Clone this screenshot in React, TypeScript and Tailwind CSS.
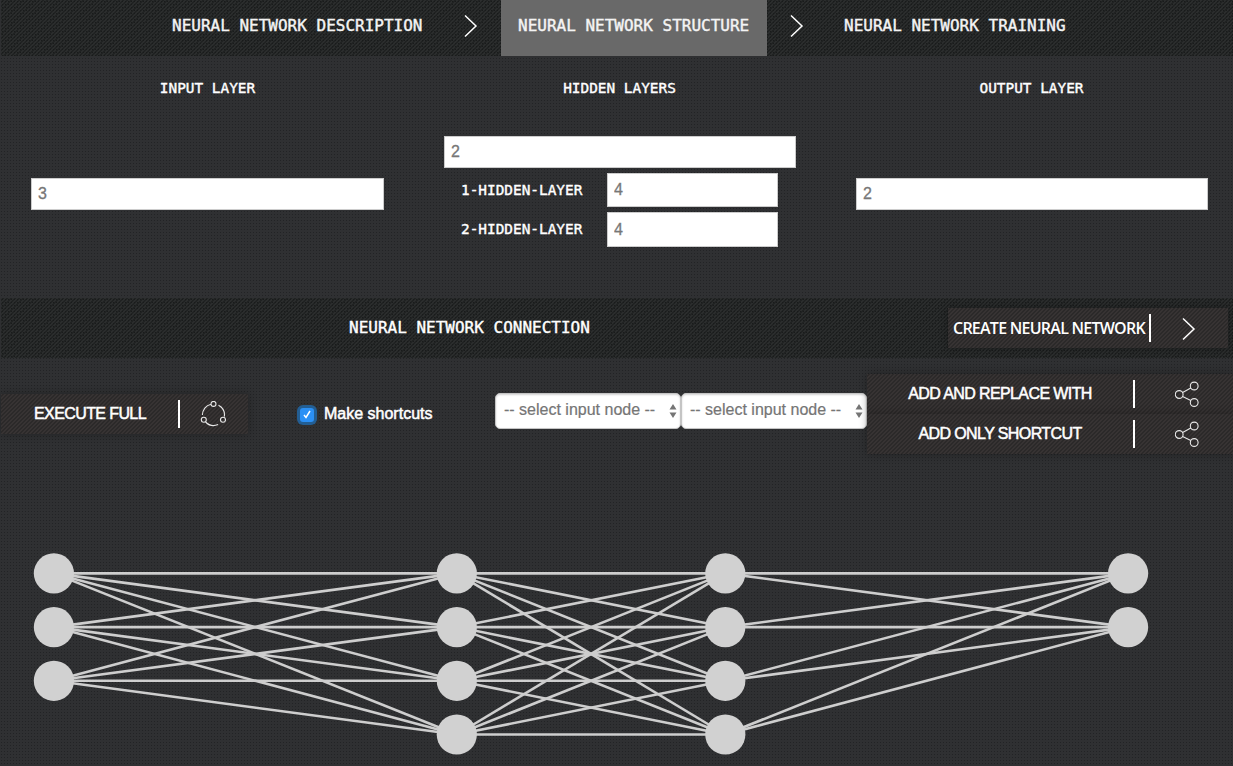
import React from "react";

const pageDots = "bg-[#2f3032] bg-[radial-gradient(circle_at_1.5px_1.5px,#222325_0.5px,transparent_0.9px)] bg-[size:3px_3px]";
const barHatch =
  "border-l border-[#2e2f31] bg-[#232525] bg-[radial-gradient(circle_at_1.5px_1.5px,#191b1b_0.5px,transparent_0.9px),linear-gradient(135deg,#2b2d2d_12.5%,#202222_12.5%,#202222_37.5%,#2b2d2d_37.5%,#2b2d2d_62.5%,#202222_62.5%,#202222_87.5%,#2b2d2d_87.5%)] bg-[size:3px_3px,4px_4px]";
const buttonHatch =
  "bg-[#2e2c2c] bg-[linear-gradient(135deg,#373333_12.5%,#2b2929_12.5%,#2b2929_37.5%,#373333_37.5%,#373333_62.5%,#2b2929_62.5%,#2b2929_87.5%,#373333_87.5%)] bg-[size:4px_4px] shadow-[0_0_8px_rgba(0,0,0,0.3)]";
const mono = "font-['DejaVu_Sans_Mono',monospace]";

function Chevron() {
  return (
    <svg width="14" height="24" viewBox="0 0 14 24" fill="none" stroke="#fff" strokeWidth="1.5" className="shrink-0">
      <path d="M1 1.5 12 12 1 22.5" />
    </svg>
  );
}

function ShareIcon() {
  return (
    <svg width="24" height="26" viewBox="0 0 24 26" fill="none" stroke="#e8e8e8" strokeWidth="1.1" className="shrink-0">
      <circle cx="4.2" cy="13.5" r="3.9" />
      <circle cx="19.2" cy="5" r="3.9" />
      <circle cx="19.2" cy="21.5" r="3.9" />
      <path d="m7.600 11.5 8.2-4.5M7.600 15.5l8.2 4" />
    </svg>
  );
}

function CycleIcon() {
  return (
    <svg width="26" height="26" viewBox="0 0 26 26" fill="none" stroke="#e8e8e8" strokeWidth="1.1" className="shrink-0">
      <circle cx="13.5" cy="2.900" r="2.5" />
      <circle cx="3.8" cy="18.800" r="2.5" />
      <circle cx="23" cy="18.800" r="2.5" />
      <path d="M11 3.2A11.200 11.200 0 0 0 2.4 14M16 3.2M18.500 4.200a11.200 11.200 0 0 1 5.800 11.500M5.600 21a11.200 11.200 0 0 0 12.500 2.600" />
    </svg>
  );
}

function Field({ value, className }: { value: string; className: string }) {
  return (
    <input
      readOnly
      value={value}
      className={`block rounded-none border border-[#ccc] bg-white px-[6px] text-[16px] leading-5 text-[#777] outline-none [-webkit-text-stroke:0.3px_#777] ${className}`}
    />
  );
}

function NodeSelect() {
  return (
    <div className="flex h-9 w-[186px] items-center justify-between rounded-[5px] border border-[#c4c4c4] bg-white pr-[3px] pl-2 text-[#757575] shadow-[inset_0_1px_2px_rgba(0,0,0,0.18)]">
      <span className="pb-0.5 text-[16px] whitespace-nowrap [-webkit-text-stroke:0.2px_#757575]">-- select input node --</span>
      <svg width="8" height="16" viewBox="0 0 8 16" fill="#757575">
        <path d="M0.5 6.5 4 1l3.500 5.500zM0.500 9.500h7L4 15z" />
      </svg>
    </div>
  );
}

function ShortcutButton({ label }: { label: string }) {
  return (
    <button className={`flex h-10 w-[366px] items-center text-[16px] text-white ${buttonHatch}`}>
      <span className="w-[266px] text-center tracking-[-0.6px] [-webkit-text-stroke:0.5px_white]">{label}</span>
      <span className="h-7 w-0.5 bg-white" />
      <span className="ml-10"><ShareIcon /></span>
    </button>
  );
}

const layers = [
  { x: 53.9, count: 3 },
  { x: 456.8, count: 4 },
  { x: 725.3, count: 4 },
  { x: 1128.1, count: 2 },
];
const nodeY = (i: number) => 53.4 + i * 53.7;

function Network() {
  return (
    <svg width="1233" height="246" viewBox="0 0 1233 246" className="block">
      <g stroke="#cecece" strokeWidth="2.6">
        {layers.slice(0, -1).map((from, l) =>
          Array.from({ length: from.count }, (_, i) =>
            Array.from({ length: layers[l + 1].count }, (_, j) => (
              <line key={`${l}-${i}-${j}`} x1={from.x} y1={nodeY(i)} x2={layers[l + 1].x} y2={nodeY(j)} />
            )),
          ),
        )}
      </g>
      <g fill="#d1d1d1">
        {layers.map((layer) =>
          Array.from({ length: layer.count }, (_, i) => (
            <circle key={`${layer.x}-${i}`} cx={layer.x} cy={nodeY(i)} r="20.1" />
          )),
        )}
      </g>
    </svg>
  );
}

export default function App() {
  return (
    <main className={`h-[766px] w-[1233px] overflow-hidden font-['Liberation_Sans',sans-serif] text-white ${pageDots}`}>
      <nav className={`flex h-14 items-start ${barHatch} ${mono} text-[16px] leading-6 text-[#f4f4f4]`}>
        <div className="w-[463px] pt-[14px] pl-[171px] whitespace-nowrap [-webkit-text-stroke:0.4px_#f4f4f4]">NEURAL NETWORK DESCRIPTION</div>
        <div className="w-[37px] pt-[14px]"><Chevron /></div>
        <div className="h-14 w-[266px] bg-[#696969] pt-[14px] pl-[17px] whitespace-nowrap [-webkit-text-stroke:0.4px_#f4f4f4]">NEURAL NETWORK STRUCTURE</div>
        <div className="w-[77px] pt-[14px] pl-[23px]"><Chevron /></div>
        <div className="pt-[14px] whitespace-nowrap [-webkit-text-stroke:0.4px_#f4f4f4]">NEURAL NETWORK TRAINING</div>
      </nav>

      <section className="flex h-[242px] pt-[22px]">
        <div className="w-[413px]">
          <h2 className={`${mono} pl-[2px] text-center text-[14.4px] leading-5 [-webkit-text-stroke:0.4px_white]`}>INPUT LAYER</h2>
          <Field value="3" className="mt-[80px] ml-[31px] h-8 w-[353px]" />
        </div>
        <div className="w-[413px]">
          <h2 className={`${mono} text-center text-[14.4px] leading-5 [-webkit-text-stroke:0.4px_white]`}>HIDDEN LAYERS</h2>
          <Field value="2" className="mt-[38px] ml-[31px] h-8 w-[352px]" />
          {["1", "2"].map((n) => (
            <label key={n} className="mt-[5px] flex h-[34px] items-center">
              <span className={`${mono} w-[194px] pl-[48px] text-[14.4px] leading-5 whitespace-nowrap [-webkit-text-stroke:0.4px_white]`}>{n}-HIDDEN-LAYER</span>
              <Field value="4" className={n === "1" ? "h-[34px] w-[171px]" : "-mb-px h-[35px] w-[171px]"} />
            </label>
          ))}
        </div>
        <div className="w-[407px]">
          <h2 className={`${mono} pl-[4px] text-center text-[14.4px] leading-5 [-webkit-text-stroke:0.4px_white]`}>OUTPUT LAYER</h2>
          <Field value="2" className="mt-[80px] ml-[30px] h-8 w-[352px]" />
        </div>
      </section>

      <header className={`flex h-[60px] pt-2.5 ${barHatch}`}>
        <h2 className={`${mono} w-[947px] pt-2 pl-[348px] text-[16px] leading-6 [-webkit-text-stroke:0.4px_white]`}>NEURAL NETWORK CONNECTION</h2>
        <button className={`flex h-10 w-[280px] items-center font-['Open_Sans',sans-serif] text-[16px] font-semibold text-white ${buttonHatch}`}>
          <span className="w-[201px] pl-[5px] text-left tracking-[-0.75px] whitespace-nowrap">CREATE NEURAL NETWORK</span>
          <span className="h-7 w-0.5 bg-white" />
          <span className="mt-0.5 ml-[31px]"><Chevron /></span>
        </button>
      </header>

      <section className="flex h-[162px] pt-4">
        <div className="w-[297px] pt-5 pl-px">
          <button className={`flex h-10 w-[247px] items-center text-[16px] text-white ${buttonHatch}`}>
            <span className="w-[177px] pl-[33px] text-left tracking-[-0.6px] [-webkit-text-stroke:0.5px_white]">EXECUTE FULL</span>
            <span className="h-7 w-0.5 bg-white" />
            <span className="ml-5"><CycleIcon /></span>
          </button>
        </div>
        <label className="flex h-10 w-[198px] items-center pt-[39px] text-[16px]">
          <span className="mt-[2px] flex h-[20px] w-[20px] items-center justify-center rounded-[6px] bg-[#235e93]">
            <span className="flex h-[14px] w-[14px] items-center justify-center rounded-[3px] bg-[#2b90f5]">
              <svg width="8" height="9" viewBox="0 0 8 9" fill="none" stroke="white" strokeWidth="1.5"><path d="m1 5 2 2.500L7 1" /></svg>
            </span>
          </span>
          <span className="pl-[7px] whitespace-nowrap [-webkit-text-stroke:0.5px_white]">Make shortcuts</span>
        </label>
        <div className="flex pt-[19px]">
          <NodeSelect />
          <NodeSelect />
        </div>
        <div>
          <ShortcutButton label="ADD AND REPLACE WITH" />
          <ShortcutButton label="ADD ONLY SHORTCUT" />
        </div>
      </section>

      <Network />
    </main>
  );
}
